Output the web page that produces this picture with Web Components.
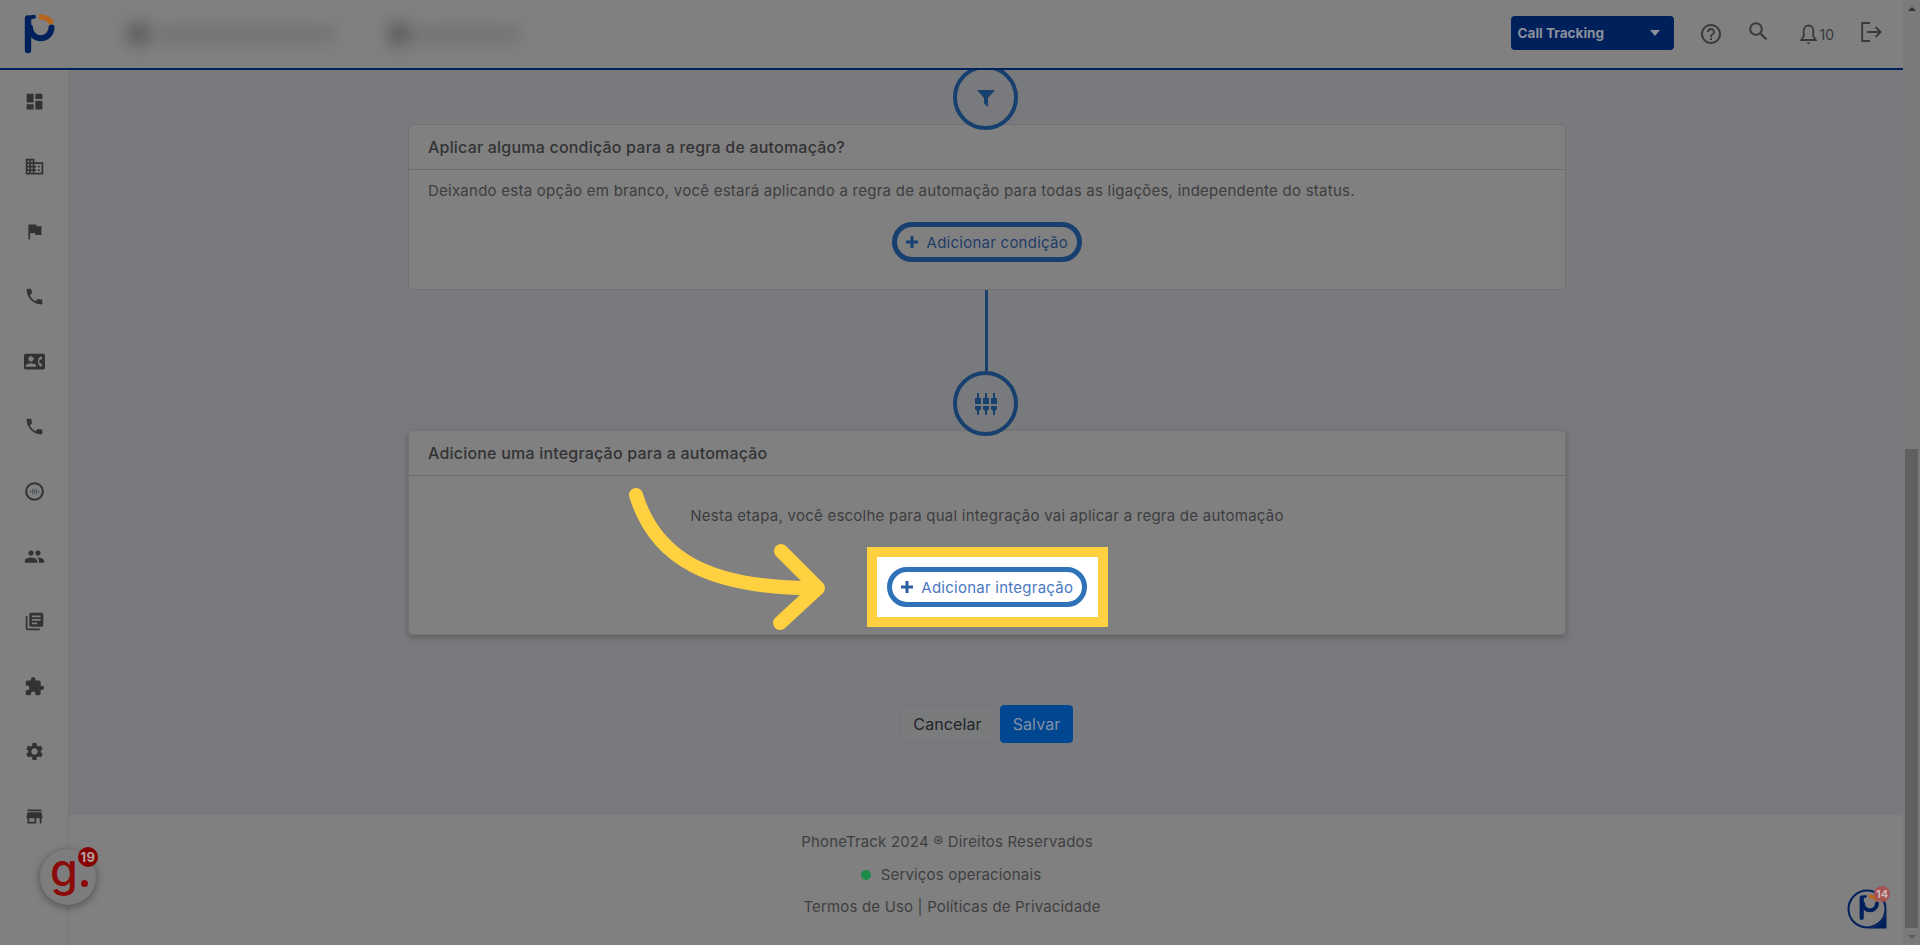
<!DOCTYPE html>
<html lang="pt-BR">
<head>
<meta charset="utf-8">
<title>PhoneTrack</title>
<style>
  html, body { height: 100%; }
  body {
    margin: 0;
    display: flex;
    overflow: hidden;
    background: #808080;
    font-family: Inter, "Noto Sans", sans-serif;
    font-size: 15px;
    letter-spacing: .245px;
    color: #3d3d3f;
  }
</style>
</head>
<body>
<pt-page>
  <pt-header slot="header"></pt-header>
  <pt-sidebar slot="sidebar"></pt-sidebar>
  <pt-content slot="content">
    <pt-step-icon icon="filter"></pt-step-icon>
    <pt-card heading="Aplicar alguma condição para a regra de automação?">
      <p class="intro">Deixando esta opção em branco, você estará aplicando a regra de automação para todas as ligações, independente do status.</p>
      <pt-pill-button>Adicionar condição</pt-pill-button>
    </pt-card>
    <pt-connector></pt-connector>
    <pt-step-icon icon="sliders"></pt-step-icon>
    <pt-card heading="Adicione uma integração para a automação" variant="raised">
      <p class="intro">Nesta etapa, você escolhe para qual integração vai aplicar a regra de automação</p>
      <pt-spotlight><pt-pill-button bright>Adicionar integração</pt-pill-button></pt-spotlight>
    </pt-card>
    <pt-form-actions></pt-form-actions>
  </pt-content>
  <pt-footer slot="footer"></pt-footer>
</pt-page>
<pt-scrollbar></pt-scrollbar>
<pt-g-bubble></pt-g-bubble>
<pt-help-bubble></pt-help-bubble>

<script>
const LOGO_MARK = `
  <path d="M28 18.5V50" fill="none" stroke="#00205c" stroke-width="6.4" stroke-linecap="round"/>
  <path d="M28 18c2.500 0 3.500-1.500 6-1.200" fill="none" stroke="#00205c" stroke-width="4" stroke-linecap="round"/>
  <path d="M30 27.500A10.500 10.500 0 1 0 51.500 27.500" fill="none" stroke="#00205c" stroke-width="6" stroke-linecap="round"/>
  <path d="M39 17A14 14 0 0 1 52 23.500" fill="none" stroke="#b5651d" stroke-width="5.500"/>
`;

const MATERIAL = {
  dashboard: 'M3 13h8V3H3v10zm0 8h8v-6H3v6zm10 0h8V11h-8v10zm0-18v6h8V3h-8z',
  domain: 'M12 7V3H2v18h20V7H12zM6 19H4v-2h2v2zm0-4H4v-2h2v2zm0-4H4V9h2v2zm0-4H4V5h2v2zm4 12H8v-2h2v2zm0-4H8v-2h2v2zm0-4H8V9h2v2zm0-4H8V5h2v2zm10 12h-8v-2h2v-2h-2v-2h2v-2h-2V9h8v10zm-2-8h-2v2h2v-2zm0 4h-2v2h2v-2z',
  flag: 'M14.4 6L14 4H5v17h2v-7h5.6l.4 2h7V6z',
  phone: 'M6.62 10.79c1.44 2.83 3.76 5.14 6.59 6.59l2.2-2.2c.27-.27.67-.36 1.02-.24 1.12.37 2.33.57 3.57.57.55 0 1 .45 1 1V20c0 .55-.45 1-1 1-9.39 0-17-7.61-17-17 0-.55.45-1 1-1h3.5c.55 0 1 .45 1 1 0 1.25.2 2.45.57 3.57.11.35.03.74-.25 1.02l-2.2 2.2z',
  contact: 'M22 3H2C.9 3 0 3.9 0 5v14c0 1.1.9 2 2 2h20c1.1 0 1.99-.9 1.99-2L24 5c0-1.1-.9-2-2-2zM8 6c1.66 0 3 1.34 3 3s-1.34 3-3 3-3-1.34-3-3 1.34-3 3-3zm6 12H2v-1c0-2 4-3.1 6-3.1s6 1.1 6 3.1v1zm3.85-4h1.64L21 16l-1.99 1.99c-1.31-.98-2.28-2.38-2.73-3.99-.18-.64-.28-1.31-.28-2s.1-1.36.28-2c.45-1.62 1.42-3.01 2.73-3.99L21 8l-1.51 2h-1.64c-.22.63-.35 1.3-.35 2s.13 1.37.35 2z',
  people: 'M16 11c1.66 0 2.99-1.34 2.99-3S17.66 5 16 5c-1.66 0-3 1.34-3 3s1.34 3 3 3zm-8 0c1.66 0 2.99-1.34 2.99-3S9.66 5 8 5C6.34 5 5 6.34 5 8s1.34 3 3 3zm0 2c-2.33 0-7 1.17-7 3.5V19h14v-2.5c0-2.33-4.67-3.5-7-3.5zm8 0c-.29 0-.62.02-.97.05 1.16.84 1.97 1.97 1.97 3.45V19h6v-2.5c0-2.33-4.67-3.5-7-3.5z',
  library: 'M4 6H2v14c0 1.1.9 2 2 2h14v-2H4V6zm16-4H8c-1.1 0-2 .9-2 2v12c0 1.1.9 2 2 2h12c1.1 0 2-.9 2-2V4c0-1.1-.9-2-2-2zm-1 9H9V9h10v2zm-4 4H9v-2h6v2zm4-8H9V5h10v2z',
  extension: 'M20.5 11H19V7c0-1.1-.9-2-2-2h-4V3.5C13 2.12 11.88 1 10.5 1S8 2.12 8 3.5V5H4c-1.1 0-1.99.9-1.99 2v3.8H3.5c1.49 0 2.7 1.21 2.7 2.7s-1.21 2.7-2.7 2.7H2V20c0 1.1.9 2 2 2h3.8v-1.5c0-1.49 1.21-2.7 2.7-2.7 1.49 0 2.7 1.21 2.7 2.7V22H17c1.1 0 2-.9 2-2v-4h1.5c1.38 0 2.5-1.12 2.5-2.5S21.88 11 20.5 11z',
  settings: 'M19.14 12.94c.04-.3.06-.61.06-.94 0-.32-.02-.64-.07-.94l2.03-1.58c.18-.14.23-.41.12-.61l-1.92-3.32c-.12-.22-.37-.29-.59-.22l-2.39.96c-.5-.38-1.03-.7-1.62-.94l-.36-2.54c-.04-.24-.24-.41-.48-.41h-3.84c-.24 0-.43.17-.47.41l-.36 2.54c-.59.24-1.13.57-1.62.94l-2.39-.96c-.22-.08-.47 0-.59.22L2.74 8.87c-.12.21-.08.47.12.61l2.03 1.58c-.05.3-.09.63-.09.94s.02.64.07.94l-2.03 1.58c-.18.14-.23.41-.12.61l1.92 3.32c.12.22.37.29.59.22l2.39-.96c.5.38 1.03.7 1.62.94l.36 2.54c.05.24.24.41.48.41h3.84c.24 0 .44-.17.47-.41l.36-2.54c.59-.24 1.13-.56 1.62-.94l2.39.96c.22.08.47 0 .59-.22l1.92-3.32c.12-.22.07-.47-.12-.61l-2.01-1.58zM12 15.6c-1.98 0-3.6-1.62-3.6-3.6s1.62-3.6 3.6-3.6 3.6 1.62 3.6 3.6-1.62 3.6-3.6 3.6z',
  store: 'M20 4H4v2h16V4zm1 10v-2l-1-5H4l-1 5v2h1v6h10v-6h4v6h2v-6h1zm-9 4H6v-4h6v4z',
  help: 'M11 18h2v-2h-2v2zm1-16C6.48 2 2 6.48 2 12s4.48 10 10 10 10-4.48 10-10S17.52 2 12 2zm0 18c-4.41 0-8-3.59-8-8s3.59-8 8-8 8 3.59 8 8-3.59 8-8 8zm0-14c-2.21 0-4 1.79-4 4h2c0-1.1.9-2 2-2s2 .9 2 2c0 2-3 1.75-3 5h2c0-2.25 3-2.5 3-5 0-2.21-1.79-4-4-4z'
};

function define(name, html, setup) {
  const template = document.createElement('template');
  template.innerHTML = html;
  customElements.define(name, class extends HTMLElement {
    constructor() {
      super();
      this.attachShadow({ mode: 'open' });
      this.shadowRoot.appendChild(template.content.cloneNode(true));
      if (setup) setup(this);
    }
  });
}

define('pt-page', `
  <style>
    :host { display: grid; flex: 1; min-width: 0; grid-template: 70px 1fr / 69px 1fr; height: 945px; }
    .main { display: flex; flex-direction: column; min-height: 0; min-width: 0; }
    ::slotted([slot=header]) { grid-column: 1 / 3; }
  </style>
  <slot name="header"></slot>
  <slot name="sidebar"></slot>
  <div class="main">
    <slot name="content"></slot>
    <slot name="footer"></slot>
  </div>
`);

define('pt-header', `
  <style>
    :host {
      display: flex;
      align-items: center;
      box-sizing: border-box;
      height: 70px;
      border-bottom: 2px solid #00205c;
      background: #808080;
      padding-right: 21px;
      letter-spacing: 0;
    }
    .logo { width: 80px; height: 68px; flex: none; }
    .blur { display: flex; align-items: center; margin-left: 46px; filter: blur(8px); }
    .dot { width: 24px; height: 24px; border-radius: 50%; background: #5c5c5c; }
    .bar { height: 12px; background: #6e6e6e; }
    .bar--a { width: 180px; margin-left: 5px; }
    .bar--b { width: 106px; margin-left: 3px; }
    .dot--b { margin-left: 52px; }
    .actions { display: flex; align-items: center; margin-left: auto; }
    select-like {
      display: flex; align-items: center; justify-content: space-between;
      box-sizing: border-box; width: 163px; height: 34px; margin-bottom: 2px;
      padding: 0 14px 0 6px;
      background: #00205c; border-radius: 4px;
      color: #8b909b; font-weight: 700; font-size: 13.600px;
    }
    .caret { width: 0; height: 0; border: 5px solid transparent; border-top: 6px solid #8b909b; border-bottom: 0; }
    svg.icon { display: block; flex: none; fill: #3a3a3c; }
    .help { margin-left: 25px; }
    .search { margin: 0 0 6px 25px; }
    .bell { margin-left: 32px; }
    .count { margin-left: 2px; font-size: 14px; color: #3a3a3c; }
    .out { margin: 0 0 5px 27px; }
  </style>
  <svg class="logo" viewBox="0 0 80 68">${LOGO_MARK}</svg>
  <div class="blur">
    <span class="dot"></span><span class="bar bar--a"></span>
    <span class="dot dot--b"></span><span class="bar bar--b"></span>
  </div>
  <div class="actions">
    <select-like>Call Tracking<span class="caret"></span></select-like>
    <svg class="icon help" width="24" height="24" viewBox="0 0 24 24"><path d="${MATERIAL.help}"/></svg>
    <svg class="icon search" width="20" height="20" viewBox="0 0 20 20"><circle cx="8" cy="8" r="5.800" fill="none" stroke="#3a3a3c" stroke-width="2"/><path d="M12.500 12.500l6 6" stroke="#3a3a3c" stroke-width="2.200" fill="none"/></svg>
    <svg class="icon bell" width="17" height="21" viewBox="0 0 17 21"><path d="M8.500 1.500c-3 0-4.800 2.300-4.800 5.200v5.500L1.200 16h14.600l-2.500-3.800V6.700c0-2.900-1.800-5.200-4.800-5.200z" fill="none" stroke="#3a3a3c" stroke-width="1.800"/><path d="M6.500 18.400h4L8.500 20.500z"/></svg>
    <span class="count">10</span>
    <svg class="icon out" width="21" height="20" viewBox="0 0 21 20"><path d="M9 1H1.200v18H9M6 10h13.500M14.500 5l5 5-5 5" fill="none" stroke="#3a3a3c" stroke-width="1.900"/></svg>
  </div>
`);

const NAV = ['dashboard', 'domain', 'flag', 'phone', 'contact', 'phone', 'wave', 'people', 'library', 'extension', 'settings', 'store'];
define('pt-sidebar', `
  <style>
    :host {
      display: flex; flex-direction: column;
      box-sizing: border-box;
      background: #808080;
      border-right: 1px solid #777;
      min-height: 0;
    }
    .row { flex: none; height: 65px; display: flex; align-items: center; justify-content: center; padding-left: 1px; }
    .row:first-of-type { margin-top: -1px; }
    svg { width: 21px; height: 21px; fill: #323234; }
  </style>
`, el => {
  el.shadowRoot.innerHTML += NAV.map(name => {
    const glyph = name === 'wave'
      ? '<circle cx="12" cy="12" r="9.500" fill="none" stroke="#323234" stroke-width="2.400"/><path d="M7.500 10.500v3M10 8.500v7M12 10v4M14 8.500v7M16.500 10.500v3" stroke="#4f5560" stroke-width="1.300" fill="none"/>'
      : `<path d="${MATERIAL[name]}"/>`;
    return `<div class="row"><svg viewBox="0 0 24 24">${glyph}</svg></div>`;
  }).join('');
});

define('pt-content', `
  <style>
    :host {
      display: flex; flex-direction: column; align-items: center;
      flex: 1; min-height: 0; overflow: hidden;
      background: #797a7d;
      padding-left: 2px;
    }
    .top { height: 0; margin-top: -5px; }
  </style>
  <div class="top"></div>
  <slot></slot>
`);

define('pt-step-icon', `
  <style>
    :host {
      display: flex; align-items: center; justify-content: center;
      box-sizing: border-box; flex: none;
      width: 65px; height: 65px; margin: 0 0 -6px -3px;
      border: 4.500px solid #17406f; border-radius: 50%;
      background: #797a7d;
      position: relative; z-index: 1;
    }
    svg { display: block; fill: #17406f; }
  </style>
`, el => {
  const shapes = {
    filter: '<svg width="22" height="22" viewBox="0 0 22 22"><path d="M2 3h18l-7 8v9l-4-3.500V11z"/></svg>',
    sliders: '<svg width="22" height="22" viewBox="0 0 22 22"><g id="s"><path d="M2 0h2v5h2v6H0V5h2zM0 13h6v3l-2 2v4H2v-4l-2-2z"/></g><use href="#s" x="8"/><use href="#s" x="16"/></svg>'
  };
  el.shadowRoot.innerHTML += shapes[el.getAttribute('icon')];
});

define('pt-connector', `
  <style>
    :host { display: block; flex: none; width: 3px; height: 81px; background: #17406f; margin-left: -1px; }
  </style>
`);

define('pt-card', `
  <style>
    :host {
      display: block; flex: none;
      box-sizing: border-box; width: 1158px;
      background: #808080;
      border: 1px solid #717171;
      border-radius: 4px;
    }
    :host([variant=raised]) { box-shadow: 0 3px 6px rgba(0,0,0,.22); border-color: #747474; }
    header {
      height: 45px; padding: 0 19px 1px;
      box-sizing: border-box;
      display: flex; align-items: center;
      border-bottom: 1px solid #6d6d6d;
      font-size: 16px; font-weight: 500; letter-spacing: .2px; color: #333335;
    }
    .body { display: flex; flex-direction: column; align-items: center; padding: 9px 19px 27px; }
    ::slotted(p) { align-self: stretch; margin: 0; line-height: 24px; }
    :host([variant=raised]) .body { padding: 28px 19px 7px; }
    :host([variant=raised]) ::slotted(p) { text-align: center; }
    ::slotted(pt-pill-button) { margin-top: 19px; }
    ::slotted(pt-spotlight) { margin-top: 19px; }
  </style>
  <header></header>
  <div class="body"><slot></slot></div>
`, el => {
  el.shadowRoot.querySelector('header').textContent = el.getAttribute('heading');
});

define('pt-pill-button', `
  <style>
    :host {
      display: inline-flex; align-items: center; gap: 8.500px;
      box-sizing: border-box; height: 40px; padding: 0 9px;
      border: 5px solid #17406f; border-radius: 20px;
      color: #1f3d68; font-size: 15px; letter-spacing: .25px;
      white-space: nowrap;
    }
    :host([bright]) { border-color: #2f72b9; color: #4a78c0; background: #fff; margin: 0 !important; }
    svg { display: block; fill: #17406f; flex: none; }
    :host([bright]) svg { fill: #2c5ea3; }
  </style>
  <svg width="12" height="12" viewBox="0 0 12 12"><path d="M4.500 0h3v4.500H12v3H7.500V12h-3V7.500H0v-3h4.500z"/></svg>
  <slot></slot>
`);

define('pt-spotlight', `
  <style>
    :host {
      display: flex; align-items: center; justify-content: center;
      box-sizing: border-box; width: 241px; height: 80px;
      border: 10px solid #ffd140; background: #fff;
      position: relative;
    }
    svg { position: absolute; left: -246px; top: -67px; width: 200px; height: 150px; overflow: visible; }
  </style>
  <slot></slot>
  <svg viewBox="0 0 200 150" fill="none" stroke="#ffd140" stroke-width="14" stroke-linecap="round" stroke-linejoin="round">
    <path d="M5 5C25 70 80 98 182 98"/>
    <path d="M150 61l37 37-38 35"/>
  </svg>
`);

define('pt-form-actions', `
  <style>
    :host { display: flex; gap: 5px; margin: 70px 0 0 -1px; flex: none; }
    button {
      box-sizing: border-box; height: 38px;
      font-family: inherit; font-size: 16px; letter-spacing: .1px;
      border-radius: 4px; border: 1px solid #74757a;
    }
    .cancel { width: 95px; background: #797b7d; color: #232527; }
    .save { width: 73px; background: #004690; border-color: #004690; color: #8391a3; }
  </style>
  <button class="cancel">Cancelar</button>
  <button class="save">Salvar</button>
`);

define('pt-footer', `
  <style>
    :host {
      display: flex; flex-direction: column; align-items: center;
      flex: none; box-sizing: border-box; height: 130px;
      padding: 15px 78px 0 0;
      background: #808080;
      color: #3f3f41; font-size: 15px; letter-spacing: .17px; line-height: 24px;
    }
    .line { margin-bottom: 8.500px; white-space: nowrap; }
    .status { display: flex; align-items: center; gap: 10px; margin-left: 8px; }
    .status i { width: 10px; height: 10px; border-radius: 50%; background: #1b8a4b; }
    .terms { margin-left: 10px; }
  </style>
  <div class="line">PhoneTrack 2024 ® Direitos Reservados</div>
  <div class="line status"><i></i>Serviços operacionais</div>
  <div class="line terms">Termos de Uso | Políticas de Privacidade</div>
`);

define('pt-scrollbar', `
  <style>
    :host {
      display: flex; flex-direction: column; align-items: center;
      flex: none; width: 17px; height: 945px;
      background: #7a7a7a;
    }
    .btn { flex: none; height: 17px; display: flex; align-items: center; justify-content: center; }
    .up { width: 0; height: 0; border: 4px solid transparent; border-bottom: 4px solid #333; border-top: 0; }
    .down { width: 0; height: 0; border: 4px solid transparent; border-top: 4px solid #5a5a5a; border-bottom: 0; }
    .space { height: 432px; flex: none; }
    .thumb { width: 13px; flex: 1; background: #606060; }
  </style>
  <div class="btn"><span class="up"></span></div>
  <div class="space"></div>
  <div class="thumb"></div>
  <div class="btn"><span class="down"></span></div>
`);

define('pt-g-bubble', `
  <style>
    :host {
      position: absolute; left: 40px; top: 849px;
      display: flex; align-items: flex-start;
      width: 56px; height: 56px; border-radius: 50%;
      background: #7d7d7d;
      box-shadow: 0 2px 8px rgba(0,0,0,.4);
      color: #8b0a0a; font-size: 45px; font-weight: 500; line-height: 1; letter-spacing: 0;
    }
    .mark { margin: -2px 0 0 10px; }
    .dot { position: absolute; left: 40.500px; top: 30.500px; width: 7px; height: 7px; border-radius: 50%; background: #8b0a0a; }
    .badge {
      position: absolute; left: 38px; top: -2px;
      width: 20px; height: 20px; border-radius: 50%;
      background: #860000; color: #b5a5a5;
      font-size: 13px; font-weight: 700; line-height: 20px; text-align: center; letter-spacing: .5px;
    }
  </style>
  <span class="mark">g</span>
  <span class="dot"></span>
  <span class="badge">19</span>
`);

define('pt-help-bubble', `
  <style>
    :host { position: absolute; left: 1847px; top: 889px; width: 40px; height: 40px; display: block; letter-spacing: 0; }
    svg { display: block; }
    .badge {
      position: absolute; left: 27px; top: -3px;
      width: 16px; height: 16px; border-radius: 50%;
      background: #a65353; color: #c9b5b5;
      font-size: 11px; font-weight: 700; line-height: 16px; text-align: center;
    }
  </style>
  <svg width="40" height="40" viewBox="0 0 40 40">
    <circle cx="20" cy="20" r="18.500" fill="none" stroke="#00205c" stroke-width="2"/>
    <path d="M39.500 20V39.500H20A19.500 19.500 0 0 0 39.500 20z" fill="#00205c"/>
    <g transform="translate(-3.500 -3.500) scale(.65)">${LOGO_MARK}</g>
  </svg>
  <span class="badge">14</span>
`);
</script>
</body>
</html>
